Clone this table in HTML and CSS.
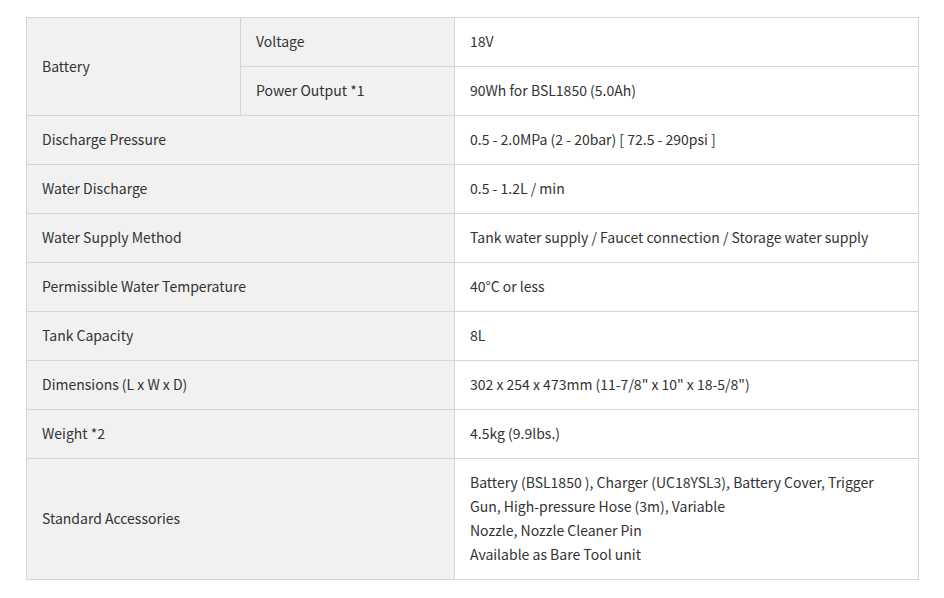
FILE: index.html
```html
<!DOCTYPE html>
<html>
<head>
<meta charset="utf-8">
<link rel="stylesheet" href="styles.css">
</head>
<body>
<table class="spec">
  <colgroup><col class="c1"><col class="c2"><col class="c3"></colgroup>
  <tr><th rowspan="2">Battery</th><th>Voltage</th><td>18V</td></tr>
  <tr><th>Power Output *1</th><td>90Wh for BSL1850 (5.0Ah)</td></tr>
  <tr><th colspan="2">Discharge Pressure</th><td>0.5 - 2.0MPa (2 - 20bar) [ 72.5 - 290psi ]</td></tr>
  <tr><th colspan="2">Water Discharge</th><td>0.5 - 1.2L / min</td></tr>
  <tr><th colspan="2">Water Supply Method</th><td>Tank water supply / Faucet connection / Storage water supply</td></tr>
  <tr><th colspan="2">Permissible Water Temperature</th><td>40°C or less</td></tr>
  <tr><th colspan="2">Tank Capacity</th><td>8L</td></tr>
  <tr><th colspan="2">Dimensions (L x W x D)</th><td>302 x 254 x 473mm (11-7/8" x 10" x 18-5/8")</td></tr>
  <tr><th colspan="2">Weight *2</th><td>4.5kg (9.9lbs.)</td></tr>
  <tr class="tall"><th colspan="2">Standard Accessories</th><td>Battery (BSL1850 ), Charger (UC18YSL3), Battery Cover, Trigger<br>Gun, High-pressure Hose (3m), Variable<br>Nozzle, Nozzle Cleaner Pin<br>Available as Bare Tool unit</td></tr>
</table>
</body>
</html>
```
FILE: styles.css
```css
html, body {
  margin: 0;
  padding: 0;
  background: #fff;
}
body {
  padding: 17px 0 0 26px;
  font-family: "Noto Sans CJK JP", "Source Sans Pro", sans-serif;
  font-size: 14px;
  color: #333;
}
.spec {
  border-collapse: collapse;
  table-layout: fixed;
  width: 892px;
}
.c1 { width: 214px; }
.c2 { width: 214px; }
.c3 { width: 464px; }
.spec th, .spec td {
  border: 1px solid #d5d5d5;
  height: 49px;
  padding: 0 15px 2px;
  text-align: left;
  font-weight: normal;
  line-height: 24px;
  box-sizing: border-box;
}
.spec th {
  background: #f1f1f1;
}
.spec td {
  background: #fff;
}
.spec .tall th, .spec .tall td {
  height: 121px;
}
.spec .tall td {
  padding-top: 11px;
  padding-bottom: 13px;
}
```
